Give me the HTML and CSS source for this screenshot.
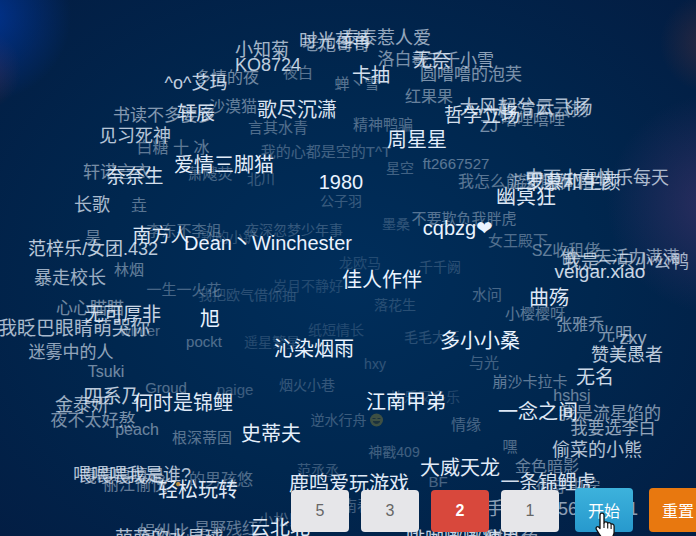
FILE: index.html
```html
<!DOCTYPE html>
<html lang="zh-CN">
<head>
    <meta charset="UTF-8">
    <meta name="viewport" content="width=device-width, initial-scale=1.0">
    <title>抽奖</title>
    <link rel="stylesheet" href="styles.css">
</head>
<body>
    <main class="stage">
        <ul id="cloud" class="cloud"></ul>

        <div class="tools">
            <div class="counts">
                <button type="button" class="button">5</button>
                <button type="button" class="button">3</button>
                <button type="button" class="button selected">2</button>
                <button type="button" class="button">1</button>
            </div>
            <button type="button" class="button action start">开始</button>
            <button type="button" class="button action reset">重置</button>
        </div>

        <svg class="pointer" viewBox="0 0 22 30" width="22" height="30" aria-hidden="true">
            <path d="M6 3c0-2.6 4-2.6 4 0v8c.5-1.600 3.500-1.400 3.700.4 1-1.200 3.200-.8 3.400.9 1.200-.8 3 0 3 1.900v6.300c0 2-1.600 3.500-1.600 5.500v3H8.300v-2.600C6.500 24 4.600 21.200 2.500 17.600c-1.300-2.300 1-3.900 2.500-2.200l1 1.200z" fill="#fff" stroke="#111" stroke-width="1.300" stroke-linejoin="round"/>
            <path d="M10 11v5M13.700 12v4.500M17.100 13v4" fill="none" stroke="#111" stroke-width="1.100"/>
        </svg>
    </main>

    <script src="script.js"></script>
</body>
</html>
```

FILE: styles.css
```css
:root {
    --bg-color: #00254c;
    --tag-color: #eaf3ff;
    --count-color: #e6e6e9;
    --selected-color: #d8483c;
    --start-color: #2fa4d4;
    --reset-color: #e8780f;
}

* {
    box-sizing: border-box;
}

body {
    margin: 0;
    font-family: "Liberation Sans", "Noto Sans CJK SC", sans-serif;
    background: var(--bg-color);
}

.stage {
    position: relative;
    min-height: 100vh;
    overflow: hidden;
    background:
        radial-gradient(circle at -2% 3%, rgba(0, 60, 175, 0.7), transparent 85px),
        radial-gradient(circle at -3% 13%, rgba(105, 45, 60, 0.5), transparent 42px),
        radial-gradient(circle at 102% 8%, rgba(85, 50, 60, 0.5), transparent 50px),
        radial-gradient(circle at 103% 38%, rgba(80, 55, 115, 0.55), transparent 110px),
        radial-gradient(ellipse at 50% 52%, #002e5b 0%, #00274f 50%, #031d43 100%);
}

/* names */
.cloud {
    position: absolute;
    inset: 0;
    margin: 0;
    padding: 0;
    list-style: none;
}

.tag {
    position: absolute;
    transform: translate(-50%, -50%);
    color: var(--tag-color);
    line-height: 1;
    white-space: nowrap;
}

.smile {
    width: 14px;
    height: 14px;
    vertical-align: -2px;
    margin-left: 3px;
}

.spark {
    color: #e9a53a;
}

/* bottom buttons */
.tools {
    position: absolute;
    left: 41.8%;
    bottom: 4px;
    display: flex;
    align-items: flex-end;
    gap: 16px;
}

.counts {
    display: flex;
    gap: 12px;
}

.button {
    width: 58px;
    height: 42px;
    flex: none;
    padding: 0;
    border: none;
    border-radius: 4px;
    background: var(--count-color);
    color: #666;
    font-family: inherit;
    font-size: 16px;
    cursor: pointer;
}

.selected {
    background: var(--selected-color);
    color: #fff;
    font-weight: bold;
}

.action {
    height: 44px;
    color: #fff;
}

.start {
    background: var(--start-color);
    background: linear-gradient(#3db2dc, #2799cd);
}

.reset {
    background: var(--reset-color);
}

.pointer {
    position: absolute;
    left: 85.3%;
    bottom: -6px;
}
```

FILE: script.js
```js
// [name, x, y, font size, opacity], x and y are the middle of the name on the field
const FIELD_WIDTH = 696;
const FIELD_HEIGHT = 536;

const tags = [
    ['龙欧马', 360, 263, 14, 0.15],
    ['岁月不静好', 308, 286, 14, 0.15],
    ['落花生', 395, 305, 14, 0.17],
    ['纸短情长', 336, 330, 14, 0.15],
    ['遥星繁星', 272, 342, 14, 0.16],
    ['快乐又多乐', 425, 397, 14, 0.15],
    ['毛毛大王', 432, 337, 14, 0.18],
    ['千千阙', 440, 267, 14, 0.18],
    ['我把欧气借你抽', 247, 295, 14, 0.18],
    ['hxy', 375, 364, 14, 0.2],
    ['墨桑', 396, 224, 14, 0.2],
    ['烟火小巷', 307, 385, 14, 0.22],
    ['公子羽', 341, 201, 14, 0.24],
    ['夜深忽梦少年事', 294, 230, 14, 0.22],
    ['别的小铲', 229, 237, 14, 0.2],
    ['逆水行舟', 347, 420, 14, 0.25, 'smile'],
    ['神戳409', 394, 452, 14, 0.27],
    ['范丞丞', 318, 470, 14, 0.24],
    ['BF', 438, 481, 15, 0.3],
    ['北川', 261, 179, 14, 0.24],
    ['paige', 235, 389, 15, 0.25],
    ['星空', 400, 168, 14, 0.28],
    ['我的心都是空的T^T', 326, 151, 15, 0.28],
    ['与光', 484, 362, 15, 0.28],
    ['南春', 357, 505, 15, 0.28],
    ['小松鼠', 281, 519, 15, 0.3],
    ['言其水青', 278, 127, 15, 0.34],
    ['精神鸭骗', 383, 124, 15, 0.34],
    ['萧飕荧', 210, 173, 15, 0.32],
    ['李东不李姐', 184, 230, 15, 0.32],
    ['一生一火花', 184, 289, 15, 0.3],
    ['水问', 487, 294, 15, 0.3],
    ['女王殿下', 518, 240, 15, 0.34],
    ['情缘', 466, 424, 15, 0.3],
    ['嘿', 510, 446, 15, 0.34],
    ['pockt', 204, 341, 15, 0.34],
    ['Groud', 166, 387, 15, 0.35],
    ['winter', 140, 330, 15, 0.34],
    ['ft2667527', 456, 163, 15, 0.38],
    ['夜白', 298, 72, 15, 0.38],
    ['蝉丶雪', 357, 83, 15, 0.38],
    ['垚', 139, 206, 16, 0.38],
    ['不要欺负我胖虎', 464, 218, 15, 0.36],
    ['林烟', 129, 269, 15, 0.42],
    ['根深蒂固', 202, 437, 15, 0.38],
    ['小樱樱呀', 535, 313, 15, 0.38],
    ['崩沙卡拉卡', 530, 381, 15, 0.4],
    ['SZ收租佬', 566, 251, 16, 0.42],
    ['我怎么能没有你', 514, 182, 16, 0.38],
    ['白糖 十 冰', 173, 148, 16, 0.4],
    ['昊', 93, 238, 16, 0.44],
    ['的男孩悠', 221, 480, 16, 0.34],
    ['星野残红', 226, 529, 16, 0.42],
    ['红果果', 429, 97, 16, 0.44],
    ['沙漠猫', 233, 107, 16, 0.42],
    ['金色暗影', 547, 467, 16, 0.44],
    ['御守中柠', 568, 487, 16, 0.42],
    ['多情的夜', 227, 78, 16, 0.48],
    ['嘻哩嘻哩', 533, 120, 16, 0.46],
    ['ZJ', 489, 127, 16, 0.5],
    ['hshsj', 572, 396, 16, 0.45],
    ['peach', 137, 430, 16, 0.46],
    ['Tsuki', 106, 372, 16, 0.48],
    ['张雅乔', 580, 325, 16, 0.5],
    ['丽江愉悦', 135, 485, 16, 0.42],
    ['心心瞄瞄', 90, 308, 17, 0.48],
    ['游戏人间相生', 560, 182, 17, 0.46],
    ['娟纵比', 164, 532, 17, 0.46],
    ['轩诺言衣', 117, 172, 17, 0.5],
    ['洛白羲', 403, 59, 17, 0.52],
    ['圆噜噜的泡芙', 471, 74, 17, 0.52],
    ['光明', 615, 334, 17, 0.54],
    ['夜不太好熬', 93, 420, 17, 0.52],
    ['我是流星馅的', 610, 413, 17, 0.54],
    ['书读不多要多', 164, 115, 17, 0.56],
    ['一阵清风云扬', 535, 110, 18, 0.5],
    ['老炮哥哥', 336, 44, 17, 0.54],
    ['做一天活力满满', 620, 257, 17, 0.58],
    ['千千小雪', 460, 60, 17, 0.6],
    ['迷雾中的人', 71, 352, 17, 0.62],
    ['我要选李白', 613, 428, 17, 0.62],
    ['嘎嘎嘎嘎是', 122, 476, 17, 0.55],
    ['手机用户56201341', 562, 509, 18, 0.6],
    ['zxy', 633, 338, 18, 0.64],
    ['泰泰惹人爱', 386, 38, 18, 0.64],
    ['暴走校长', 70, 278, 18, 0.67],
    ['金泰妍', 82, 405, 18, 0.67],
    ['小知菊', 262, 50, 18, 0.7],
    ['时光荏苒', 335, 41, 18, 0.72],
    ['长歌', 92, 205, 18, 0.72],
    ['我是一只小公鸭', 626, 262, 18, 0.7],
    ['我眨巴眼睛萌哭你', 74, 328, 19, 0.72],
    ['中雨小雪快乐每天', 597, 178, 18, 0.72],
    ['偷菜的小熊', 597, 450, 18, 0.76],
    ['见习死神', 135, 136, 18, 0.78],
    ['大风起兮云飞扬', 526, 107, 19, 0.74],
    ['喂喂喂我是谁?', 132, 475, 18, 0.76],
    ['萌萌的水星球', 169, 538, 18, 0.76],
    ['范梓乐/女团.432', 93, 249, 18, 0.8],
    ['赞美愚者', 627, 355, 18, 0.8],
    ['四系乃', 112, 396, 19, 0.8],
    ['KO8724', 268, 65, 18, 0.82],
    ['^o^艾玛', 196, 83, 18, 0.82],
    ['无奈', 432, 60, 19, 0.82],
    ['罗慕和生颜', 573, 182, 19, 0.84],
    ['veigar.xiao', 600, 271, 19, 0.86],
    ['无可厚非', 123, 314, 19, 0.86],
    ['无名', 595, 377, 19, 0.88],
    ['甜心兔', 512, 539, 18, 0.6],
    ['啡咖嘟嘟糖果', 463, 539, 19, 0.84],
    ['卡抽', 371, 75, 19, 0.9],
    ['轩辰', 196, 113, 19, 0.9],
    ['奈奈生', 135, 176, 19, 0.9],
    ['哲学立场', 482, 115, 19, 0.9],
    ['一条锦鲤虎', 548, 482, 19, 0.9],
    ['歌尽沉潇', 297, 110, 20, 0.93],
    ['幽冥狂', 526, 197, 20, 0.94],
    ['南方人', 161, 235, 19, 0.94],
    ['曲殇', 549, 298, 20, 0.95],
    ['何时是锦鲤', 183, 403, 20, 0.95],
    ['一念之间', 538, 412, 20, 0.95],
    ['轻松玩转', 198, 490, 20, 0.95],
    ['●', 178, 484, 10, 0.8, 'spark'],
    ['云北北', 280, 528, 20, 0.95],
    ['周星星', 417, 140, 20, 0.97],
    ['爱情三脚猫', 224, 165, 20, 0.97],
    ['鹿鸣爱玩游戏', 349, 484, 20, 0.96],
    ['大威天龙', 460, 468, 20, 0.96],
    ['史蒂夫', 271, 434, 20, 0.98],
    ['1980', 341, 182, 20, 1],
    ['cqbzg❤\uFE0E', 458, 228, 20, 1],
    ['Dean丶Winchester', 268, 243, 20, 1],
    ['佳人作伴', 382, 280, 20, 1],
    ['旭', 210, 319, 20, 1],
    ['沁染烟雨', 314, 349, 20, 1],
    ['多小小桑', 480, 341, 20, 1],
    ['江南甲弟', 406, 402, 20, 1]
];

const smile = '<svg class="smile" viewBox="0 0 14 14">' +
    '<circle cx="7" cy="7" r="6.500" fill="#f5c518"/>' +
    '<path d="M3 5.500h3M8 5.500h3M3.500 8.500q3.500 4 7 0z" fill="#6b4a00" stroke="#6b4a00"/></svg>';

const cloud = document.getElementById('cloud');

tags.forEach(([name, x, y, size, opacity, extra]) => {
    const item = document.createElement('li');
    item.className = 'tag';
    item.textContent = name;
    item.style.left = (x / FIELD_WIDTH * 100) + '%';
    item.style.top = (y / FIELD_HEIGHT * 100) + '%';
    item.style.fontSize = size + 'px';
    item.style.opacity = opacity;
    if (extra === 'smile') {
        item.insertAdjacentHTML('beforeend', smile);
    } else if (extra) {
        item.classList.add(extra);
    }
    cloud.appendChild(item);
});

document.querySelectorAll('.counts .button').forEach(button => {
    button.addEventListener('click', () => {
        document.querySelector('.selected').classList.remove('selected');
        button.classList.add('selected');
    });
});
```
